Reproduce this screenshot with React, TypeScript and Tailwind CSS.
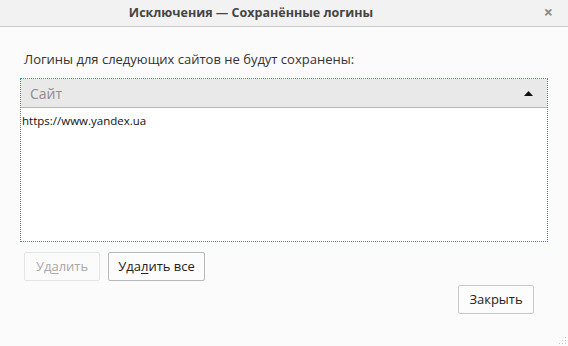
export default function App() {
  return (
    <div
      className="w-[568px] h-[346px] bg-[#fbfbfc] flex flex-col text-[#222] overflow-hidden relative"
      style={{ fontFamily: '"Open Sans", "Noto Sans", sans-serif' }}
    >
      <div className="h-[27px] shrink-0 bg-[#f2f2f2] border-b border-[#cdcdcd] flex items-center relative">
        <div className="flex-1 text-center text-[12.5px] font-bold text-[#444] leading-none pr-[66px]">
          Исключения — Сохранённые логины
        </div>
        <span className="absolute right-[15px] top-[4px] text-[16px] font-bold text-[#8a8a8a] leading-none">
          ×
        </span>
      </div>

      <div className="flex-1 flex flex-col px-[20px] pt-[23px]">
        <div className="text-[13px] pl-[4px] leading-[18px] text-[#333]">
          Логины для следующих сайтов не будут сохранены:
        </div>

        <div className="mt-[10px] h-[164px] border border-dotted border-[#3a8fa8] bg-white flex flex-col">
          <div className="h-[29px] bg-[#e9e9e9] border-b border-[#b8b8b8] flex items-center justify-between pl-[9px] pr-[14px]">
            <span className="text-[14px] text-[#8c8c8c]">Сайт</span>
            <svg width="9" height="5" viewBox="0 0 9 5">
              <path d="M0 5 L4.5 0 L9 5 Z" fill="#111" />
            </svg>
          </div>
          <div className="pl-[1px] pt-[5px] text-[11.5px] text-[#111] leading-[16px]">
            https://www.yandex.ua
          </div>
        </div>

        <div className="mt-[10px] flex gap-[8px] pl-[4px]">
          <button className="w-[76px] h-[29px] border border-[#e4e4e4] bg-[#fbfbfb] text-[13px] text-[#a8a8a8] rounded-[2px]">
            Уд<span className="underline underline-offset-2">а</span>лить
          </button>
          <button className="w-[97px] h-[29px] border border-[#b8b8b8] bg-[#fcfcfc] text-[13px] text-[#222] rounded-[2px]">
            Уда<span className="underline underline-offset-2">л</span>ить все
          </button>
        </div>

        <div className="mt-[4px] flex justify-end pr-[14px]">
          <button className="w-[76px] h-[29px] border border-[#c8c8c8] bg-[#fcfcfc] text-[13px] text-[#222] rounded-[2px]">
            Закрыть
          </button>
        </div>
      </div>

      <svg className="absolute right-[1px] bottom-[1px]" width="10" height="10" viewBox="0 0 10 10">
        <g fill="#c4c4c4">
          <rect x="8" y="2" width="1" height="1" />
          <rect x="5" y="5" width="1" height="1" />
          <rect x="8" y="5" width="1" height="1" />
          <rect x="2" y="8" width="1" height="1" />
          <rect x="5" y="8" width="1" height="1" />
          <rect x="8" y="8" width="1" height="1" />
        </g>
      </svg>
    </div>
  )
}
